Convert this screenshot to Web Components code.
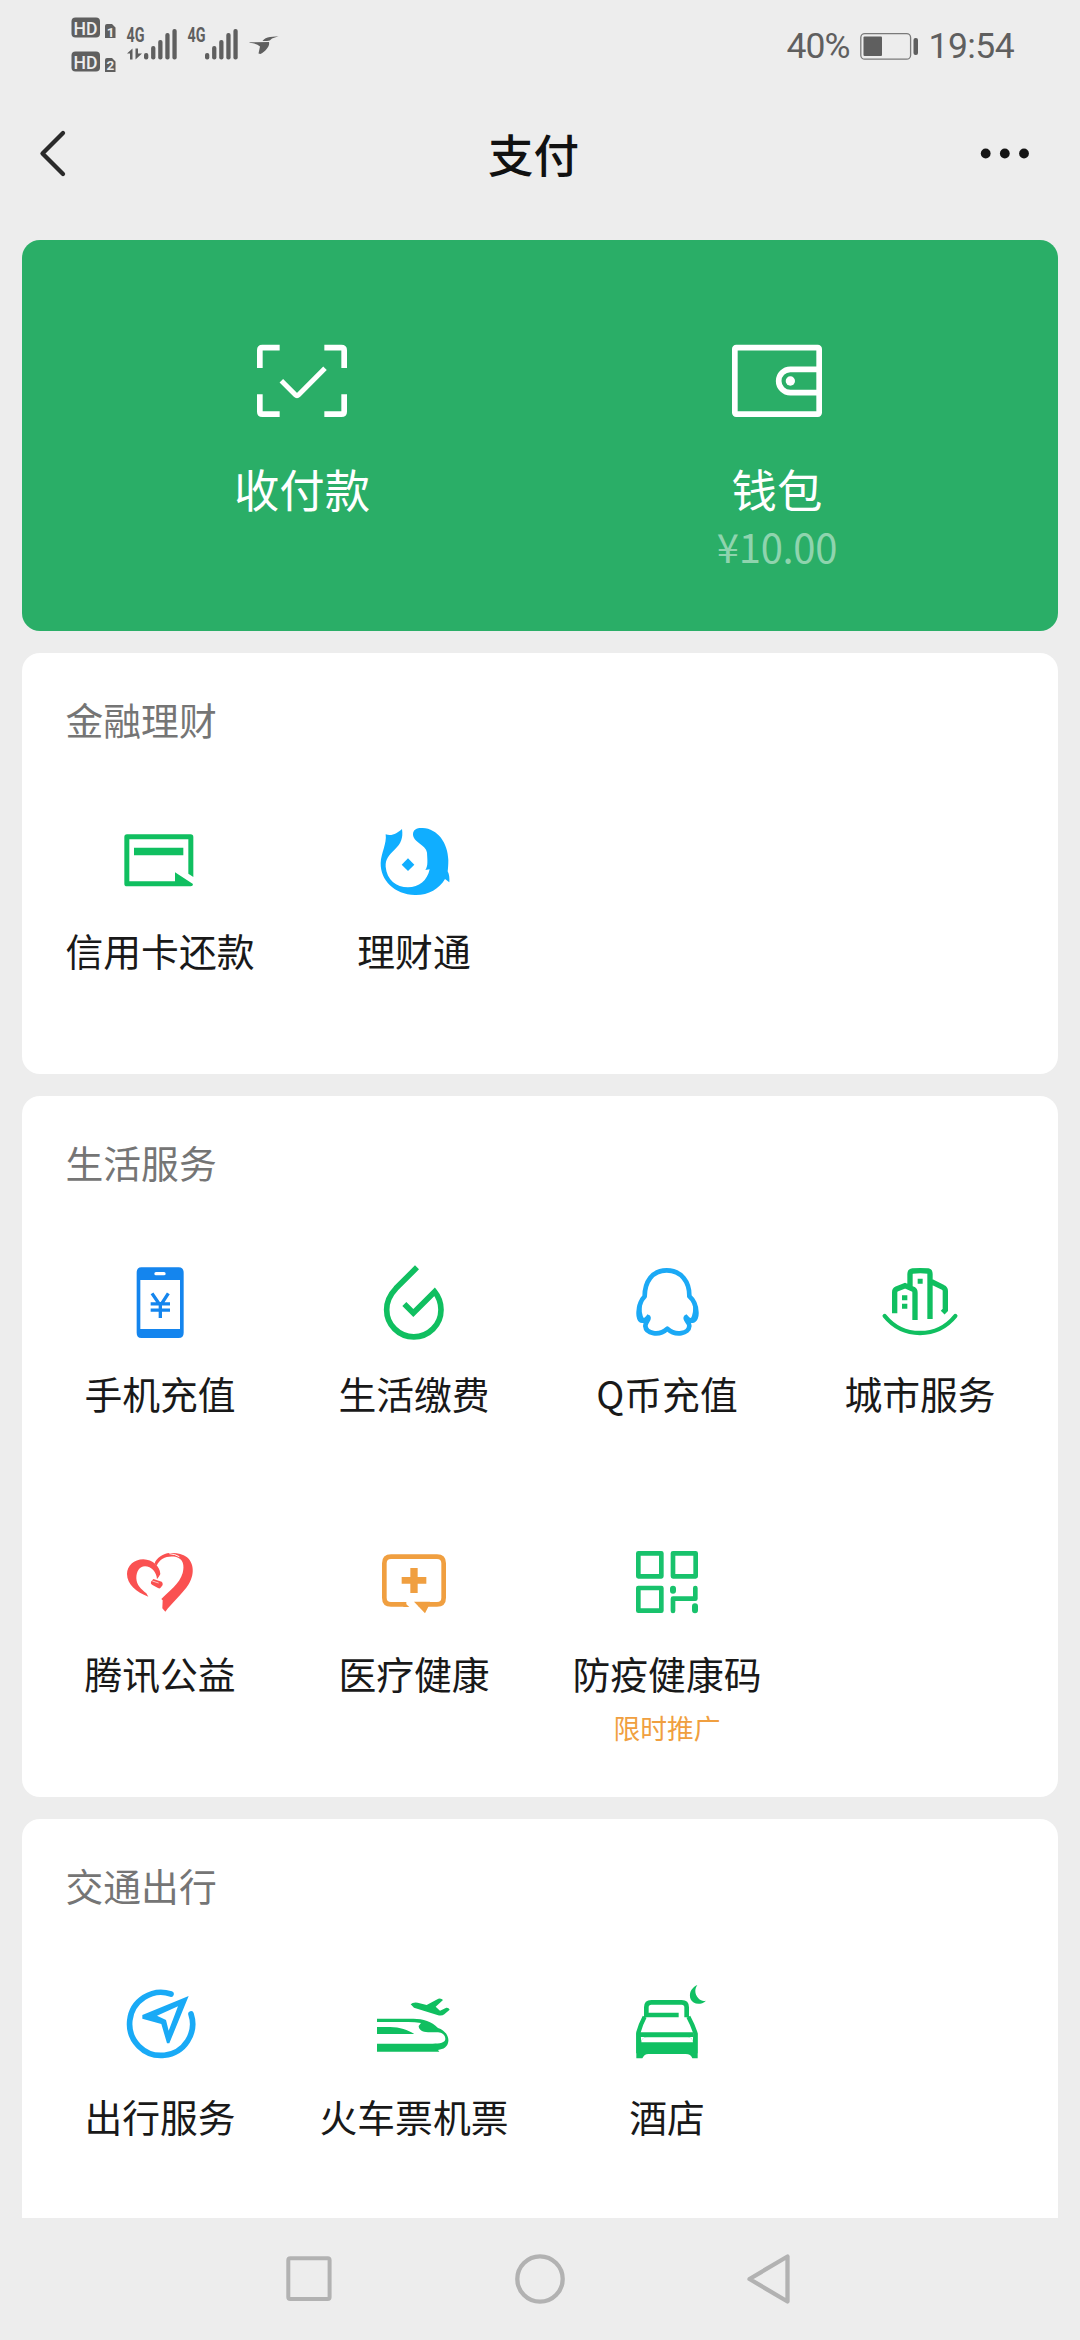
<!DOCTYPE html>
<html lang="zh-CN">
<head>
<meta charset="utf-8">
<title>支付</title>
<style>
html,body{margin:0;padding:0}
body{width:1080px;height:2340px;overflow:hidden;background:#ededed;font-family:"Noto Sans CJK SC",sans-serif;color:#191919}
</style>
</head>
<body>
<pay-screen>
  <status-bar slot="top"></status-bar>
  <title-bar slot="top">支付</title-bar>

  <wallet-card>
    <wallet-entry>
      <svg slot="icon" width="100" height="90" viewBox="156 45 300 270" fill="none" stroke="#fff" stroke-width="17"><path d="M239 83H187Q179.500 83 179.500 91V144M373 83H424Q432.500 83 432.500 91V144M179.500 223V275Q179.500 282.500 187 282.500H239M432.500 223V275Q432.500 282.500 424 282.500H373"/><path d="M244 182L286 224Q291 229 296 224L375 145" stroke-width="15"/></svg>
      收付款
    </wallet-entry>
    <wallet-entry amount="¥10.00">
      <svg slot="icon" width="100" height="90" viewBox="141 45 300 270" fill="none" stroke="#fff" stroke-width="17"><rect x="164.500" y="83" width="253" height="199.500" rx="4"/><path d="M414 148H331A35 35 0 0 0 331 218H414"/><circle cx="331" cy="183" r="14" fill="#fff" stroke="none"/></svg>
      钱包
    </wallet-entry>
  </wallet-card>

  <service-card heading="金融理财">
    <service-item>
      <svg slot="icon" width="90" height="90" viewBox="225 405 270 270" fill="#10bf60"><path fill-rule="evenodd" d="M261 463H452Q460 463 460 471V591L445 581V478H268V604H405V577L459 612Q459 619 452 619H261Q253 619 253 611V471Q253 463 261 463Z"/><path d="M282 503H430V526H282Z"/></svg>
      信用卡还款
    </service-item>
    <service-item>
      <svg slot="icon" width="90" height="90" viewBox="987 405 270 270" fill="#10aeff"><path d="M1037 463C1056 470 1072 459 1086 447C1090 474 1083 490 1065 508C1046 527 1036 537 1037 560C1040 599 1069 622 1104 622C1137 622 1162 602 1169 568L1156 570C1165 557 1162 540 1161 518C1158 494 1119 488 1119 463C1119 448 1132 443 1148 444C1193 446 1224 489 1225 540C1225 555 1224 566 1223 574C1228 583 1229 595 1228 607L1215 597C1198 627 1164 646 1125 645C1063 643 1021 601 1022 549C1023 520 1041 491 1037 463Z"/><path d="M1104 535L1123 554L1104 573L1085 554Z"/></svg>
      理财通
    </service-item>
  </service-card>

  <service-card heading="生活服务">
    <service-item>
      <svg slot="icon" width="90" height="90" viewBox="45 54 270 270"><path fill="#1485ee" fill-rule="evenodd" d="M124 82H236Q251 82 251 98V278Q251 294 236 294H124Q110 294 110 278V98Q110 82 124 82ZM121 120V267H240V120ZM168 96Q163 96 163 101T168 106H192Q197 106 197 101T192 96Z"/><path d="M156 160L177 191H185L205 160M152 191.500H210M152 210.500H210M181 190V234" fill="none" stroke="#1485ee" stroke-width="10"/></svg>
      手机充值
    </service-item>
    <service-item>
      <svg slot="icon" width="90" height="90" viewBox="807 54 270 270" fill="none" stroke="#10bf60" stroke-width="17"><path d="M951 82L888 145C870 164 860 183 860 209A81 81 0 0 0 1023 209C1023 190 1017 171 1004 155L940 219L913 192"/></svg>
      生活缴费
    </service-item>
    <service-item>
      <svg slot="icon" width="90" height="90" viewBox="66 54 270 270" fill="none" stroke="#1ba9f5" stroke-width="14" stroke-linejoin="round"><path d="M200 91C156 91 134 126 134 169C122 181 117 198 116 216C115 231 119 242 126 242C132 242 139 239 145 232C149 239 136 245 136 258C138 281 177 289 202 266C227 289 267 281 268 258C268 245 253 239 258 232C264 240 271 242 277 242C286 242 290 229 289 216C288 198 283 182 268 169C269 126 244 91 200 91Z"/><path d="M114 190Q105 238 124 245L147 233L143 222L133 238Q121 219 127 189ZM289 190Q300 238 280 245L256 233L259 222L271 238Q283 219 278 189Z" fill="#1ba9f5" stroke="none"/></svg>
      Q币充值
    </service-item>
    <service-item>
      <svg slot="icon" width="90" height="90" viewBox="825 54 270 270" fill="none" stroke="#10bf60" stroke-width="16"><path d="M884 220V157Q884 150 890 147L915 137L940 148Q945 151 945 158V240M930 142V102Q930 94 938 93Q961 91 984 93Q990 94 990 102V237M990 123L1029 142Q1036 145 1036 153V210L1028 218"/><path d="M854 228C909 296 1011 296 1066 228" stroke-width="13" stroke-linecap="round"/><path d="M953 116H968V131H953ZM906 166H922V181H906ZM906 191H922V206H906Z" fill="#10bf60" stroke="none"/></svg>
      城市服务
    </service-item>
    <service-item>
      <svg slot="icon" width="90" height="90" viewBox="45 24 270 270" fill="#fa5151"><path d="M145 200C109 187 81 163 81 132C81 108 102 88 130 88C158 89 180 109 181 132C178 139 174 143 171 148C170 126 154 109 135 109C118 110 109 124 109 145C110 166 123 177 139 190Z"/><path d="M170 107C180 85 202 76 229 81C249 87 254 105 248 129C239 161 208 183 184 207L188 211L187 235L196 245C216 219 249 190 266 163C287 130 281 89 251 76C238 69 221 69 208 69C191 70 169 84 164 100Z"/><path d="M208 71Q225 72 238 80" fill="none" stroke="#fff" stroke-width="3"/><path d="M160 147L185 155Q189 158 188 165L183 172Q180 177 174 174L156 164Q151 161 153 155Z"/><path d="M157 153L176 159" stroke="#fff" stroke-width="2"/></svg>
      腾讯公益
    </service-item>
    <service-item>
      <svg slot="icon" width="90" height="90" viewBox="807 24 270 270"><path d="M919 223H873Q853 223 853 203V100Q853 80 873 80H1011Q1031 80 1031 100V203Q1031 223 1011 223H956" fill="none" stroke="#f09f40" stroke-width="14"/><path d="M910 215L928 231H910ZM942 215H990L985 230L975 250ZM931 114H953V141H979V161H953V189H931V161H905V141H931Z" fill="#f09f40"/></svg>
      医疗健康
    </service-item>
    <service-item note="限时推广">
      <svg slot="icon" width="90" height="90" viewBox="246 24 270 270" fill="none" stroke="#18c26c" stroke-width="14" stroke-linejoin="round"><path d="M295 70H364V139H295ZM399 70H467V139H399ZM295 174H364V242H295Z"/><path d="M399 243V206H466V174" stroke-linecap="round"/><path d="M399 176V182M465 229V241" stroke-width="18" stroke-linecap="round"/></svg>
      防疫健康码
    </service-item>
  </service-card>

  <service-card heading="交通出行">
    <service-item>
      <svg slot="icon" width="90" height="90" viewBox="45 33 270 270" fill="none" stroke="#19aaf6" stroke-width="17"><path d="M213 72A94.500 94.500 0 1 0 273 132" stroke-linecap="round" stroke-width="17"/><path fill="#19aaf6" stroke="none" fill-rule="evenodd" d="M266 78L208 220H201L184 162L127 146V135ZM234 109L171 137L198 150L206 182Z"/></svg>
      出行服务
    </service-item>
    <service-item>
      <svg slot="icon" width="90" height="90" viewBox="807 33 270 270" fill="#10bf60"><path d="M831 146H940C970 146 995 154 1014 174C1035 181 1047 198 1045 214C1043 231 1031 238 1014 240L1018 245H831V221H998C1020 221 1036 218 1036 207C1036 195 1027 188 1014 187H984C967 186 956 179 956 168L963 159C951 157 938 156 925 156H831ZM831 171H870C900 171 923 180 943 192H831Z"/><path d="M932 103Q938 96 953 98L980 105L1015 86Q1024 84 1029 90L1007 110L1020 122L1039 113Q1046 112 1049 119L1033 133Q1025 139 1012 135L942 113Z"/></svg>
      火车票机票
    </service-item>
    <service-item>
      <svg slot="icon" width="90" height="90" viewBox="246 33 270 270" fill="none" stroke="#10c062" stroke-width="14"><path d="M319 142V112Q319 97 334 97H425Q440 97 440 112V142M321 135H416"/><path d="M314 140Q302 162 295 188V250M445 140Q457 162 466 188V250" stroke-width="13"/><path d="M300 194H460"/><path fill="#10c062" stroke="none" d="M289 190L301 187L304 215Q307 201 320 201H443Q456 201 458 215L462 187L473 190V265H457Q453 252 437 252H325Q313 252 307 265H289ZM472 45C463 58 464 73 475 85C482 93 491 94 498 92C481 108 458 102 452 88C445 70 455 52 472 45Z"/><path d="M304 217Q305 202 320 202H443Q457 202 459 217Z" fill="#fff" stroke="none"/></svg>
      酒店
    </service-item>
  </service-card>

  <system-nav slot="bottom"></system-nav>
</pay-screen>

<script>
const define = (name, css, html) => customElements.define(name, class extends HTMLElement {
  constructor() {
    super();
    const t = document.createElement('template');
    const attr = k => this.getAttribute(k) || '';
    t.innerHTML = `<style>*{box-sizing:border-box}svg{display:block;flex:none}${css}</style>` + (typeof html === 'function' ? html(attr) : html);
    this.attachShadow({ mode: 'open' }).append(t.content.cloneNode(true));
  }
});

define('pay-screen', `
  :host{display:flex;flex-direction:column;width:1080px;height:2340px;background:#ededed;overflow:hidden}
  main{flex:1;min-height:0;overflow:hidden;display:flex;flex-direction:column;gap:22px;padding:24px 22px 0}`,
  `<slot name="top"></slot><main><slot></slot></main><slot name="bottom"></slot>`);

const bars = x => [53, 46, 40, 33, 29].map((y, i) => `<rect x="${x + i * 7.1}" y="${y}" width="4.300" height="${59.500 - y}" rx="2"/>`).join('');
define('status-bar', `
  :host{display:flex;justify-content:space-between;height:92px;padding:0 66px 0 71px;color:#5f5f5f;flex:none}
  .left{padding-top:14px}
  .right{display:flex;align-items:center;font:400 35.500px/40px Roboto,sans-serif}
  .pct{letter-spacing:-.9px;margin-right:9px}
  .time{letter-spacing:-.6px;margin-left:10px}`,
  `<div class="left"><svg width="212" height="62" viewBox="71 14 212 62" fill="#5f5f5f">
    <rect x="71.500" y="17.500" width="28.500" height="20" rx="4"/><rect x="71.500" y="51.500" width="28.500" height="20" rx="4"/>
    <path d="M107 24H112L115.500 27.500V38H105V26Q105 24 107 24ZM107 58H112L115.500 61.500V72H105V60Q105 58 107 58Z"/>
    <g font-family="Roboto,sans-serif" font-weight="500" fill="#ededed">
      <text x="73.500" y="34.800" font-size="19" textLength="24" lengthAdjust="spacingAndGlyphs">HD</text>
      <text x="73.500" y="68.800" font-size="19" textLength="24" lengthAdjust="spacingAndGlyphs">HD</text>
      <text x="106.800" y="36.600" font-size="13.500" font-weight="700">1</text>
      <text x="106.500" y="70.400" font-size="13.500" font-weight="700">2</text>
    </g>
    <g font-family="Roboto,sans-serif" font-weight="700" font-size="19.500">
      <text x="126.500" y="42.300" textLength="18" lengthAdjust="spacingAndGlyphs">4G</text>
      <text x="187.500" y="42.300" textLength="18" lengthAdjust="spacingAndGlyphs">4G</text>
    </g>
    <path d="M127 53.500L132.500 48.500V59.500H130V53.500ZM135.500 48.500H138V53.500H142L135.500 59.500Z"/>
    ${bars(144)}${bars(205)}
    <path d="M249.500 42.200L269 42C270 46 266 51 260.500 54L258.500 53.500L260 46.500Q257 43.500 249.500 42.800ZM262.500 41Q265 37.500 270 37L278.500 36.300L272 38.500Q270 41 267 41Z"/>
  </svg></div>
  <div class="right"><span class="pct">40%</span>
    <svg width="60" height="28" viewBox="859 30 60 28"><rect x="860.800" y="31.600" width="49.800" height="25.600" rx="4" fill="none" stroke="#7a7a7a" stroke-width="1.300"/><rect x="863.500" y="34.500" width="18.500" height="19.500" rx="1" fill="#5f5f5f"/><rect x="913.500" y="36" width="4.500" height="17" rx="2" fill="#5f5f5f"/></svg>
    <span class="time">19:54</span></div>`);

define('title-bar', `
  :host{display:flex;align-items:center;justify-content:space-between;height:124px;padding:0 49px 0 38px;flex:none}
  h1{margin:0 2px 2px 0;font:500 45.500px/60px "Noto Sans CJK SC",sans-serif;color:#111}
  svg{width:56px}`,
  `<svg width="56" height="50" viewBox="38 128.500 56 50" fill="none" stroke="#2a2a2a" stroke-width="4.300" stroke-linecap="round" stroke-linejoin="round"><path d="M63 132.500L42.500 153L63 173.500"/></svg>
   <h1><slot></slot></h1>
   <svg width="56" height="50" viewBox="975 129 56 50" fill="#151515"><circle cx="985.700" cy="153.500" r="4.900"/><circle cx="1004.800" cy="153.500" r="4.900"/><circle cx="1024" cy="153.500" r="4.900"/></svg>`);

define('wallet-card', `
  :host{display:grid;grid-template-columns:475px 475px;height:391px;flex:none;box-sizing:border-box;padding:95px 43.500px 0 42.500px;border-radius:18px;background:#2aae67;color:#fff}`,
  `<slot></slot>`);

define('wallet-entry', `
  :host{display:flex;flex-direction:column;align-items:center}
  ::slotted(svg){display:block}
  .name{margin-top:33px;font-size:45.400px;line-height:60px}
  .amount{margin-top:3px;font-size:40px;line-height:50px;color:#8fd4ae;letter-spacing:-.3px}`,
  a => `<slot name="icon"></slot><div class="name"><slot></slot></div>${a('amount') ? `<div class="amount">${a('amount')}</div>` : ''}`);

define('service-card', `
  :host{display:block;flex:none;border-radius:18px;background:#fff}
  h2{margin:0;padding:38px 0 47px 43.500px;font:400 37.800px/56px "Noto Sans CJK SC",sans-serif;color:#757575}
  .grid{display:grid;grid-template-columns:254px 254px 252px 254px;grid-auto-rows:280px;padding:0 11px}`,
  a => `<h2>${a('heading')}</h2><div class="grid"><slot></slot></div>`);

define('service-item', `
  :host{display:flex;flex-direction:column;align-items:center;box-sizing:border-box;padding-top:21px}
  ::slotted(svg){display:block}
  .name{margin-top:17px;font-size:37.800px;line-height:56px;white-space:nowrap}
  .note{margin-top:7px;font-size:26.800px;line-height:40px;color:#f09f40}`,
  a => `<slot name="icon"></slot><div class="name"><slot></slot></div>${a('note') ? `<div class="note">${a('note')}</div>` : ''}`);

define('system-nav', `
  :host{display:flex;justify-content:space-between;height:122px;flex:none;box-sizing:border-box;padding:31px 281px 0;background:#ededed}`,
  `<svg width="56" height="60" viewBox="281 2249 56 60" fill="none" stroke="#b2b2b2" stroke-width="4"><rect x="288.300" y="2258.300" width="41.300" height="40.800" rx="2"/></svg>
   <svg width="56" height="60" viewBox="512 2249 56 60" fill="none" stroke="#b2b2b2" stroke-width="4.300"><circle cx="540" cy="2279" r="22.700"/></svg>
   <svg width="56" height="60" viewBox="743 2249 56 60" fill="none" stroke="#b2b2b2" stroke-width="4.300" stroke-linejoin="round"><path d="M749.500 2279L787.500 2256.500V2301.500Z"/></svg>`);
</script>
</body>
</html>
